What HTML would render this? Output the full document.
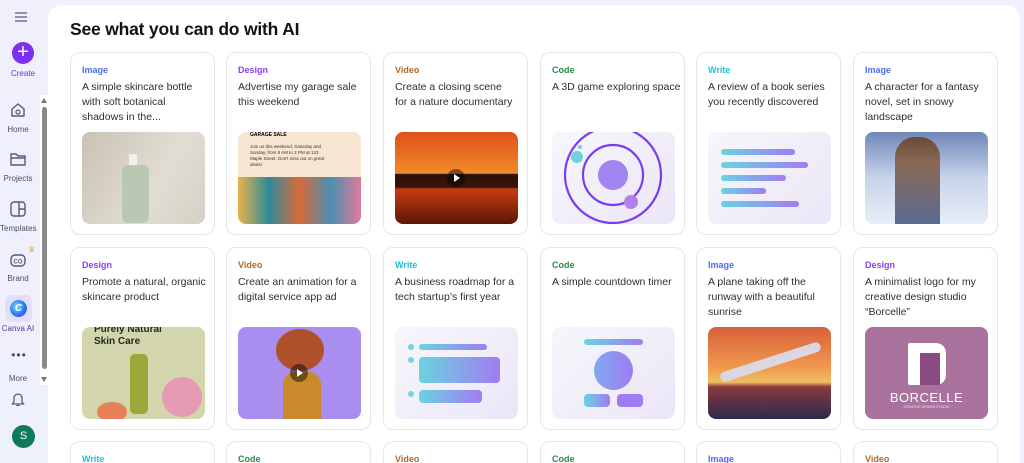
<!DOCTYPE html>
<html><head><meta charset="utf-8"><style>
*{margin:0;padding:0;box-sizing:border-box}
html,body{width:1024px;height:463px;overflow:hidden}
body{background:#eff0fb;font-family:"Liberation Sans",sans-serif;position:relative}
.side{position:absolute;left:0;top:0;width:48px;height:463px;background:linear-gradient(#f1effc,#eef1fb)}
.panel{position:absolute;left:48px;top:5px;width:972px;height:458px;background:#fff;border-radius:14px 14px 0 0}
h1{position:absolute;left:70px;top:19px;font-size:17.5px;font-weight:700;color:#0e1318;letter-spacing:-0.2px}
.card{position:absolute;width:145px;height:183px;border:1px solid #e6e7eb;border-radius:10px;background:#fff}
.lab{position:absolute;left:11px;top:12px;font-size:9px;font-weight:700}
.txt{position:absolute;left:11px;top:27px;width:127px;font-size:10.5px;line-height:15px;color:#2b2f36}
.img{position:absolute;left:11px;top:79px;width:123px;height:92px;border-radius:8px;overflow:hidden}
.Image{color:#4a6cf0}.Design{color:#8b3dff}.Video{color:#b0692a}.Code{color:#2b8a3e}.Write{color:#1bc2d6}
.nav{position:absolute;left:0;width:36px;text-align:center;font-size:8px;color:#4a4d6a}
.ic{position:absolute;left:9px;width:18px;height:18px}
.grad{background:linear-gradient(135deg,#f5f7fb,#ece6f7)}
.bar{position:absolute;height:6px;border-radius:3px;background:linear-gradient(90deg,#6ad3e0,#a07cf2)}
.play{position:absolute;left:52px;top:37px;width:18px;height:18px;border-radius:50%;background:rgba(0,0,0,.45)}
.play:after{content:"";position:absolute;left:7px;top:5px;border-left:6px solid #fff;border-top:4px solid transparent;border-bottom:4px solid transparent}
</style></head><body>
<div class="side"></div>
<div style="position:absolute;left:40px;top:95px;width:8px;height:290px;background:#fff"></div>
<div style="position:absolute;left:42px;top:107px;width:5px;height:262px;background:#8a8a8a;border-radius:3px"></div>
<div style="position:absolute;left:41px;top:98px;border-left:3px solid transparent;border-right:3px solid transparent;border-bottom:5px solid #777"></div>
<div style="position:absolute;left:41px;top:377px;border-left:3px solid transparent;border-right:3px solid transparent;border-top:5px solid #777"></div>
<svg class="ic" style="top:10px;left:14px;width:14px;height:14px" viewBox="0 0 14 14"><path d="M1 3h12M1 7h12M1 11h12" stroke="#555a78" stroke-width="1.3"/></svg>
<div style="position:absolute;left:12px;top:42px;width:22px;height:22px;border-radius:50%;background:#7b2ff0;color:#fff;text-align:center;font-size:20px;line-height:21px">+</div>
<div class="nav" style="top:69px;left:5px;color:#5b3fc4">Create</div>
<svg class="ic" style="top:101px" viewBox="0 0 18 18"><path d="M3 8l6-5 6 5v7H3z" fill="none" stroke="#555a78" stroke-width="1.4" stroke-linejoin="round"/><rect x="7" y="9" width="4" height="4" rx="2" fill="none" stroke="#555a78" stroke-width="1.2"/></svg>
<div class="nav" style="top:125px">Home</div>
<svg class="ic" style="top:150px" viewBox="0 0 18 18"><path d="M2 4h5l2 2h7v9H2z M2 8h14" fill="none" stroke="#555a78" stroke-width="1.4" stroke-linejoin="round"/></svg>
<div class="nav" style="top:174px">Projects</div>
<svg class="ic" style="top:200px" viewBox="0 0 18 18"><rect x="2" y="2" width="14" height="14" rx="3" fill="none" stroke="#555a78" stroke-width="1.4"/><path d="M10 2v14M10 9h6" stroke="#555a78" stroke-width="1.4"/></svg>
<div class="nav" style="top:224px">Templates</div>
<svg class="ic" style="top:250px" viewBox="0 0 18 18"><rect x="2" y="5" width="14" height="11" rx="4" fill="none" stroke="#555a78" stroke-width="1.4"/><text x="9" y="13.5" font-size="6" text-anchor="middle" fill="#555a78" font-family="Liberation Sans" font-weight="700">CO</text></svg>
<div style="position:absolute;left:28px;top:245px;color:#f0a830;font-size:8px">♛</div>
<div class="nav" style="top:274px">Brand</div>
<div style="position:absolute;left:5px;top:295px;width:27px;height:27px;border-radius:6px;background:#e3defa"></div>
<div style="position:absolute;left:10px;top:300px;width:17px;height:17px;border-radius:50%;background:radial-gradient(circle at 40% 40%,#6fe3ff,#2a6cf0 60%,#7b2ff0);color:#fff;font-size:10px;font-weight:700;text-align:center;line-height:17px;font-style:italic">C</div>
<div class="nav" style="top:324px;color:#4a3aa8">Canva AI</div>
<div class="nav" style="top:348px;font-size:12px;letter-spacing:1px;left:1px">•••</div>
<div class="nav" style="top:374px">More</div>
<svg class="ic" style="top:390px" viewBox="0 0 18 18"><path d="M5 12V8a4 4 0 018 0v4l1.5 2h-11zM7.5 15.5h3" fill="none" stroke="#555a78" stroke-width="1.3"/></svg>
<div style="position:absolute;left:12px;top:425px;width:23px;height:23px;border-radius:50%;background:#0f7a5a;color:#fff;text-align:center;font-size:11px;line-height:23px">S</div>
<div class="panel"></div>
<h1>See what you can do with AI</h1>

<div class="card" style="left:70px;top:52px"><div class="lab Image">Image</div><div class="txt">A simple skincare bottle with soft botanical shadows in the...</div>
<div class="img" style="background:linear-gradient(120deg,#c9c2b4,#e2ddd3 60%,#d6d0c4)"><div style="position:absolute;left:47px;top:22px;width:8px;height:12px;background:#f0f0ec"></div><div style="position:absolute;left:40px;top:33px;width:27px;height:58px;border-radius:6px;background:#b9c8b2"></div></div></div>
<div class="card" style="left:226px;top:52px"><div class="lab Design">Design</div><div class="txt">Advertise my garage sale this weekend</div>
<div class="img" style="background:#f7e6d2"><div style="position:absolute;left:12px;top:0;font-size:5px;font-weight:700">GARAGE SALE</div><div style="position:absolute;left:12px;top:12px;width:75px;font-size:4.5px;line-height:6px;color:#333">Join us this weekend, Saturday and Sunday, from 8 AM to 2 PM at 123 Maple Street. Don't miss out on great deals!</div><div style="position:absolute;left:0;top:45px;width:123px;height:47px;background:linear-gradient(90deg,#e8b34a,#2f8a9c,#d86a3a,#4a8fb0,#e27a9a)"></div></div></div>
<div class="card" style="left:383px;top:52px"><div class="lab Video">Video</div><div class="txt" style="width:121px">Create a closing scene for a nature documentary</div>
<div class="img" style="background:linear-gradient(#e0501a,#f08a2a 45%,#2a1208 46%,#3a1508 60%,#c83a12 62%,#5a1808)"><div class="play"></div></div></div>
<div class="card" style="left:540px;top:52px"><div class="lab Code">Code</div><div class="txt" style="width:132px">A 3D game exploring space</div>
<div class="img grad"><svg width="123" height="92" viewBox="0 0 123 92"><circle cx="61" cy="43" r="48" fill="none" stroke="#7a3cf0" stroke-width="2.2"/><circle cx="61" cy="43" r="30" fill="none" stroke="#7a3cf0" stroke-width="2.2"/><circle cx="61" cy="43" r="15" fill="#a084f2"/><circle cx="79" cy="70" r="7" fill="#b080f0"/><circle cx="25" cy="25" r="6" fill="#6fd0e0"/><circle cx="28" cy="15" r="2" fill="#6fd0e0"/></svg></div></div>
<div class="card" style="left:696px;top:52px"><div class="lab Write">Write</div><div class="txt">A review of a book series you recently discovered</div>
<div class="img grad"><div class="bar" style="left:13px;top:17px;width:74px"></div><div class="bar" style="left:13px;top:30px;width:87px"></div><div class="bar" style="left:13px;top:43px;width:65px"></div><div class="bar" style="left:13px;top:56px;width:45px"></div><div class="bar" style="left:13px;top:69px;width:78px"></div></div></div>
<div class="card" style="left:853px;top:52px"><div class="lab Image">Image</div><div class="txt">A character for a fantasy novel, set in snowy landscape</div>
<div class="img" style="background:linear-gradient(#6f86b8,#c8d4ea 50%,#e8eef8)"><div style="position:absolute;left:30px;top:5px;width:45px;height:87px;border-radius:20px 20px 0 0;background:linear-gradient(#6a4a36,#8a6a55 30%,#5a6a90)"></div></div></div>

<div class="card" style="left:70px;top:247px"><div class="lab Design">Design</div><div class="txt" style="width:132px">Promote a natural, organic skincare product</div>
<div class="img" style="background:#d3d6ac"><div style="position:absolute;left:12px;top:-3px;font-size:10px;font-weight:900;color:#1d2a1a;line-height:12px">Purely Natural<br>Skin Care</div><div style="position:absolute;left:48px;top:27px;width:18px;height:60px;border-radius:5px;background:#9aa83a"></div><div style="position:absolute;left:80px;top:50px;width:40px;height:40px;border-radius:50%;background:#e59ab4"></div><div style="position:absolute;left:15px;top:75px;width:30px;height:20px;border-radius:50%;background:#e88058"></div></div></div>
<div class="card" style="left:226px;top:247px"><div class="lab Video">Video</div><div class="txt">Create an animation for a digital service app ad</div>
<div class="img" style="background:#a98ef0"><div style="position:absolute;left:38px;top:2px;width:48px;height:42px;border-radius:50%;background:#b0502a"></div><div style="position:absolute;left:45px;top:45px;width:38px;height:47px;border-radius:12px 12px 0 0;background:#c88a2a"></div><div class="play"></div></div></div>
<div class="card" style="left:383px;top:247px"><div class="lab Write">Write</div><div class="txt">A business roadmap for a tech startup’s first year</div>
<div class="img grad"><div style="position:absolute;left:13px;top:17px;width:6px;height:6px;border-radius:50%;background:#6fd6e2"></div><div class="bar" style="left:24px;top:17px;width:68px"></div><div style="position:absolute;left:13px;top:30px;width:6px;height:6px;border-radius:50%;background:#6fd6e2"></div><div class="bar" style="left:24px;top:30px;width:81px;height:26px;border-radius:4px"></div><div style="position:absolute;left:13px;top:64px;width:6px;height:6px;border-radius:50%;background:#6fd6e2"></div><div class="bar" style="left:24px;top:63px;width:63px;height:13px;border-radius:4px"></div></div></div>
<div class="card" style="left:540px;top:247px"><div class="lab Code">Code</div><div class="txt">A simple countdown timer</div>
<div class="img grad"><div class="bar" style="left:32px;top:12px;width:59px"></div><div style="position:absolute;left:42px;top:24px;width:39px;height:39px;border-radius:50%;background:linear-gradient(90deg,#80a8f0,#a07cf2)"></div><div class="bar" style="left:32px;top:67px;width:26px;height:13px;border-radius:4px"></div><div class="bar" style="left:65px;top:67px;width:26px;height:13px;border-radius:4px;background:#a07cf2"></div></div></div>
<div class="card" style="left:696px;top:247px"><div class="lab Image">Image</div><div class="txt">A plane taking off the runway with a beautiful sunrise</div>
<div class="img" style="background:linear-gradient(#d8603a,#f09a50 45%,#f0c060 60%,#8a3a40 65%,#2a2a4a)"><div style="position:absolute;left:10px;top:30px;width:105px;height:10px;background:#dcd6e0;transform:rotate(-18deg);border-radius:5px"></div></div></div>
<div class="card" style="left:853px;top:247px"><div class="lab Design">Design</div><div class="txt">A minimalist logo for my creative design studio “Borcelle”</div>
<div class="img" style="background:#a8729c"><div style="position:absolute;left:43px;top:16px;width:38px;height:42px;background:#fff;border-radius:2px 10px 10px 2px"></div><div style="position:absolute;left:55px;top:26px;width:20px;height:32px;background:#8a4a82"></div><div style="position:absolute;left:0;top:63px;width:123px;text-align:center;color:#fff;font-size:13px;letter-spacing:.5px">BORCELLE</div><div style="position:absolute;left:0;top:78px;width:123px;text-align:center;color:#f2e2ee;font-size:3.5px">CREATIVE DESIGN STUDIO</div></div></div>

<div class="card" style="left:70px;top:441px;height:30px"><div class="lab Write">Write</div></div>
<div class="card" style="left:226px;top:441px;height:30px"><div class="lab Code">Code</div></div>
<div class="card" style="left:383px;top:441px;height:30px"><div class="lab Video">Video</div></div>
<div class="card" style="left:540px;top:441px;height:30px"><div class="lab Code">Code</div></div>
<div class="card" style="left:696px;top:441px;height:30px"><div class="lab Image">Image</div></div>
<div class="card" style="left:853px;top:441px;height:30px"><div class="lab Video">Video</div></div>
</body></html>
